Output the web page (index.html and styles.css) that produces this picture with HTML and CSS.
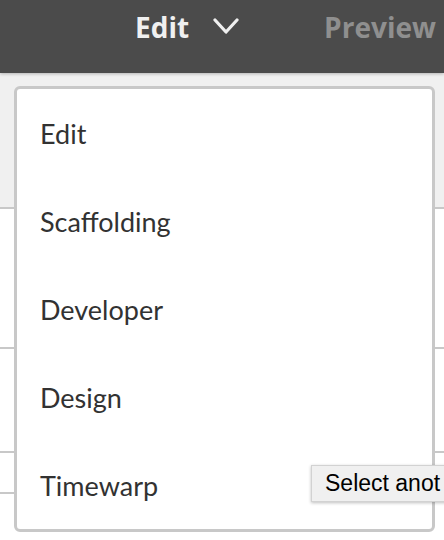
FILE: index.html
```html
<!DOCTYPE html>
<html>
<head>
<meta charset="utf-8">
<link rel="stylesheet" href="styles.css">
</head>
<body>
<div class="page">
  <header class="header">
    <span class="mode">Edit</span>
    <svg class="chev" width="26" height="17" viewBox="0 0 26 17"><polyline points="2,2 13,14 24,2" fill="none" stroke="#f0f0f0" stroke-width="3.2" stroke-linecap="round" stroke-linejoin="round"/></svg>
    <span class="preview">Preview</span>
  </header>
  <div class="toolbar"></div>
  <div class="row r1"></div>
  <div class="row r2"></div>
  <div class="row r3"></div>

  <ul class="menu">
    <li class="item">Edit</li>
    <li class="item">Scaffolding</li>
    <li class="item">Developer</li>
    <li class="item">Design</li>
    <li class="item">Timewarp</li>
  </ul>

  <div class="tooltip">Select anot</div>
</div>
</body>
</html>
```

FILE: styles.css
```css
html, body {
  margin: 0;
  padding: 0;
}
body {
  width: 444px;
  height: 540px;
  overflow: hidden;
  background: #ffffff;
  font-family: Lato, "Open Sans", sans-serif;
}
.page {
  position: relative;
  width: 444px;
  height: 540px;
  overflow: hidden;
}
.header {
  height: 73px;
  background: #4b4b4b;
  display: flex;
  align-items: flex-start;
  padding: 10px 0 0 135px;
  box-sizing: border-box;
  box-shadow: 0 1px 3px rgba(0, 0, 0, 0.25);
  position: relative;
  z-index: 1;
}
.mode,
.preview {
  font-family: "Open Sans", Lato, sans-serif;
  font-weight: 700;
  font-size: 28px;
  line-height: 34px;
  white-space: nowrap;
}
.mode {
  color: #f0f0f0;
}
.chev {
  margin: 8px 0 0 24px;
  flex: none;
}
.preview {
  margin-left: 85px;
  color: #8f8f8f;
}
.toolbar {
  height: 134px;
  background: #f0f0f0;
  border-bottom: 2px solid #c8c8c8;
}
.row {
  border-bottom: 2px solid #c8c8c8;
}
.r1 { height: 138px; }
.r2 { height: 102px; }
.r3 { height: 39px; }

.menu {
  position: absolute;
  left: 14px;
  top: 86px;
  width: 421px;
  box-sizing: border-box;
  margin: 0;
  padding: 0;
  list-style: none;
  background: #ffffff;
  border: 3px solid #c8c8c8;
  border-radius: 6px;
  z-index: 2;
}
.item {
  height: 87px;
  padding-top: 1px;
  line-height: 88px;
  padding-left: 23px;
  font-size: 27px;
  color: #323232;
}
.tooltip {
  position: absolute;
  left: 311px;
  top: 465px;
  width: 200px;
  height: 37px;
  box-sizing: border-box;
  padding-left: 13px;
  background: #f0f0f0;
  border: 1px solid #d2d2d2;
  box-shadow: 0 1px 3px rgba(0, 0, 0, 0.25);
  font-family: "Liberation Sans", Arial, sans-serif;
  font-size: 23px;
  line-height: 35px;
  color: #000000;
  white-space: nowrap;
  z-index: 3;
}
```
